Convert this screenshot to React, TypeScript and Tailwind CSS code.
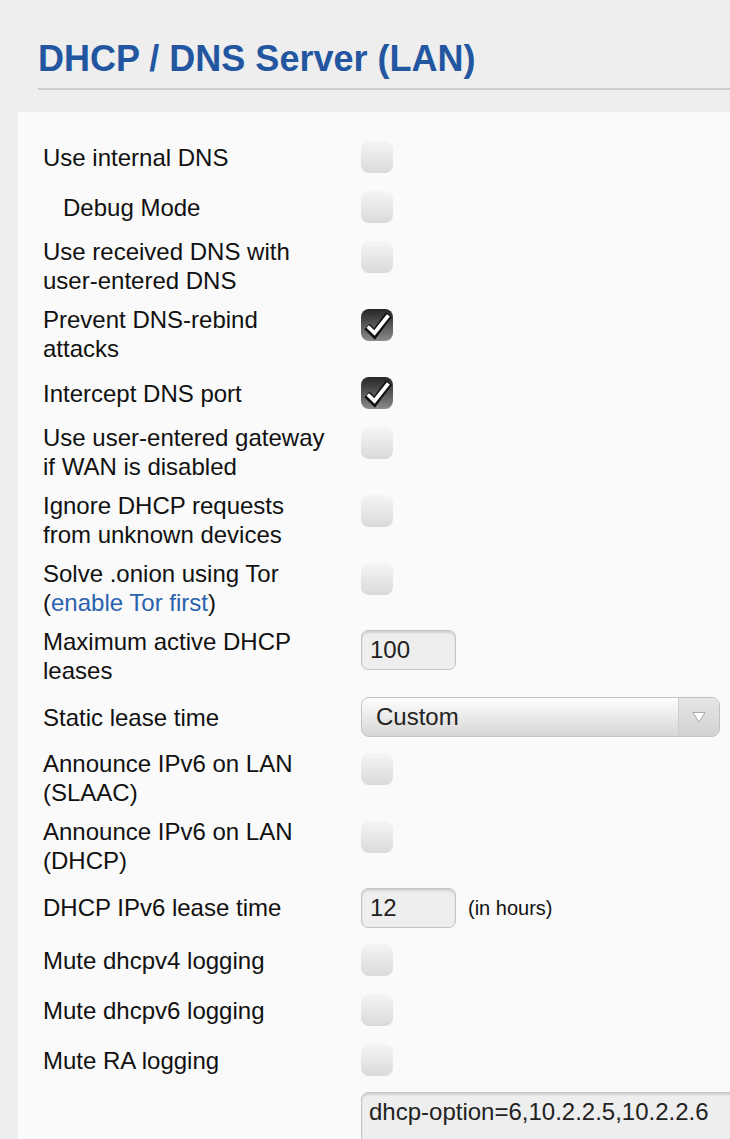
import type { ReactNode } from "react";

type Row =
  | { kind: "check"; label: ReactNode; checked?: boolean; indent?: boolean }
  | { kind: "input"; label: ReactNode; value: string; suffix?: string }
  | { kind: "select"; label: ReactNode; value: string }
  | { kind: "textarea"; value: string };

const rows: Row[] = [
  { kind: "check", label: "Use internal DNS" },
  { kind: "check", label: "Debug Mode", indent: true },
  { kind: "check", label: "Use received DNS with user-entered DNS" },
  { kind: "check", label: "Prevent DNS-rebind attacks", checked: true },
  { kind: "check", label: "Intercept DNS port", checked: true },
  { kind: "check", label: "Use user-entered gateway if WAN is disabled" },
  { kind: "check", label: "Ignore DHCP requests from unknown devices" },
  {
    kind: "check",
    label: (
      <>
        Solve .onion using Tor (<a href="#" className="text-[#2a62ae]">enable Tor first</a>)
      </>
    ),
  },
  { kind: "input", label: "Maximum active DHCP leases", value: "100" },
  { kind: "select", label: "Static lease time", value: "Custom" },
  { kind: "check", label: "Announce IPv6 on LAN (SLAAC)" },
  { kind: "check", label: "Announce IPv6 on LAN (DHCP)" },
  { kind: "input", label: "DHCP IPv6 lease time", value: "12", suffix: "(in hours)" },
  { kind: "check", label: "Mute dhcpv4 logging" },
  { kind: "check", label: "Mute dhcpv6 logging" },
  { kind: "check", label: "Mute RA logging" },
  { kind: "textarea", value: "dhcp-option=6,10.2.2.5,10.2.2.6" },
];

function Checkbox({ checked }: { checked?: boolean }) {
  if (!checked) {
    return (
      <div className="w-[32px] h-[32px] rounded-[8px] bg-linear-to-b from-[#f5f5f5] to-[#dadada]" />
    );
  }
  return (
    <div className="w-[32px] h-[32px] rounded-[8px] bg-linear-to-b from-[#262626] to-[#8c8c8c]">
      <svg width="32" height="32" viewBox="0 0 32 32">
        <path d="M6 17.5 L13.5 25 L28 5.5" fill="none" stroke="#111" strokeWidth="7.5" strokeLinejoin="miter" strokeLinecap="butt" />
        <path d="M6.8 17.5 L13.5 24 L27.4 6.4" fill="none" stroke="#fff" strokeWidth="3.8" strokeLinejoin="miter" strokeLinecap="butt" />
      </svg>
    </div>
  );
}

function TextInput({ value }: { value: string }) {
  return (
    <input
      readOnly
      defaultValue={value}
      className="w-[95px] h-[40px] rounded-[7px] border border-[#c4c4c4] bg-[#eeeeee] px-[8px] text-[24px] text-[#222] shadow-[inset_0_2px_2px_rgba(0,0,0,0.12)] outline-none"
    />
  );
}

function Select({ value }: { value: string }) {
  return (
    <div className="flex w-[359px] h-[40px] rounded-[8px] border border-[#c2c2c2] bg-linear-to-b from-[#fefefe] to-[#d6d6d6] overflow-hidden">
      <div className="flex-1 flex items-center pl-[14px] text-[24px] text-[#222]">{value}</div>
      <div className="w-[41px] flex items-center justify-center border-l border-[#cdcdcd] bg-linear-to-b from-[#e6e6e6] to-[#d2d2d2]">
        <svg width="14" height="12" viewBox="0 0 14 12">
          <path d="M1 1.5 H13 L7 11 Z" fill="#fff" stroke="#a8a8a8" strokeWidth="1" strokeLinejoin="round" />
        </svg>
      </div>
    </div>
  );
}

function Label({ children, indent }: { children: ReactNode; indent?: boolean }) {
  return (
    <div className={`w-[318px] shrink-0 self-center pr-[28px] py-[5px] text-[24px] leading-[29px] text-[#111] ${indent ? "pl-[20px]" : ""}`}>
      {children}
    </div>
  );
}

export default function App() {
  return (
    <div className="min-h-screen bg-[#eeeeee] overflow-hidden font-['Liberation_Sans',Arial,sans-serif]">
      {/* Header */}
      <div className="pl-[38px] pt-[38px]">
        <h1 className="text-[36px] leading-[42px] font-bold text-[#2356a0] pb-[8px] border-b-2 border-[#cccccc]">
          DHCP / DNS Server (LAN)
        </h1>
      </div>

      {/* Settings panel */}
      <div className="ml-[18px] mt-[22px] w-[760px] bg-[#fafafa] pl-[25px] pt-[20px] pb-[40px]">
        {rows.map((row, i) => {
          if (row.kind === "textarea") {
            return (
              <div key={i} className="flex">
                <div className="w-[318px] shrink-0" />
                <div className="pt-[6.5px]">
                  <textarea
                    readOnly
                    defaultValue={row.value}
                    className="block w-[420px] h-[100px] resize-none rounded-tl-[7px] border border-[#c4c4c4] bg-[#eeeeee] px-[7px] pt-[4px] text-[24px] leading-[29px] text-[#222] shadow-[inset_0_2px_2px_rgba(0,0,0,0.12)] outline-none"
                  />
                </div>
              </div>
            );
          }
          return (
            <div key={i} className="flex">
              <Label indent={row.kind === "check" ? row.indent : false}>{row.label}</Label>
              {row.kind === "check" && (
                <div className="self-start py-[9px]">
                  <Checkbox checked={row.checked} />
                </div>
              )}
              {row.kind === "input" && (
                <div className="self-start py-[7.5px] flex items-center gap-[12px]">
                  <TextInput value={row.value} />
                  {row.suffix && <span className="text-[20px] text-[#111]">{row.suffix}</span>}
                </div>
              )}
              {row.kind === "select" && (
                <div className="self-start py-[7px]">
                  <Select value={row.value} />
                </div>
              )}
            </div>
          );
        })}
      </div>
    </div>
  );
}
